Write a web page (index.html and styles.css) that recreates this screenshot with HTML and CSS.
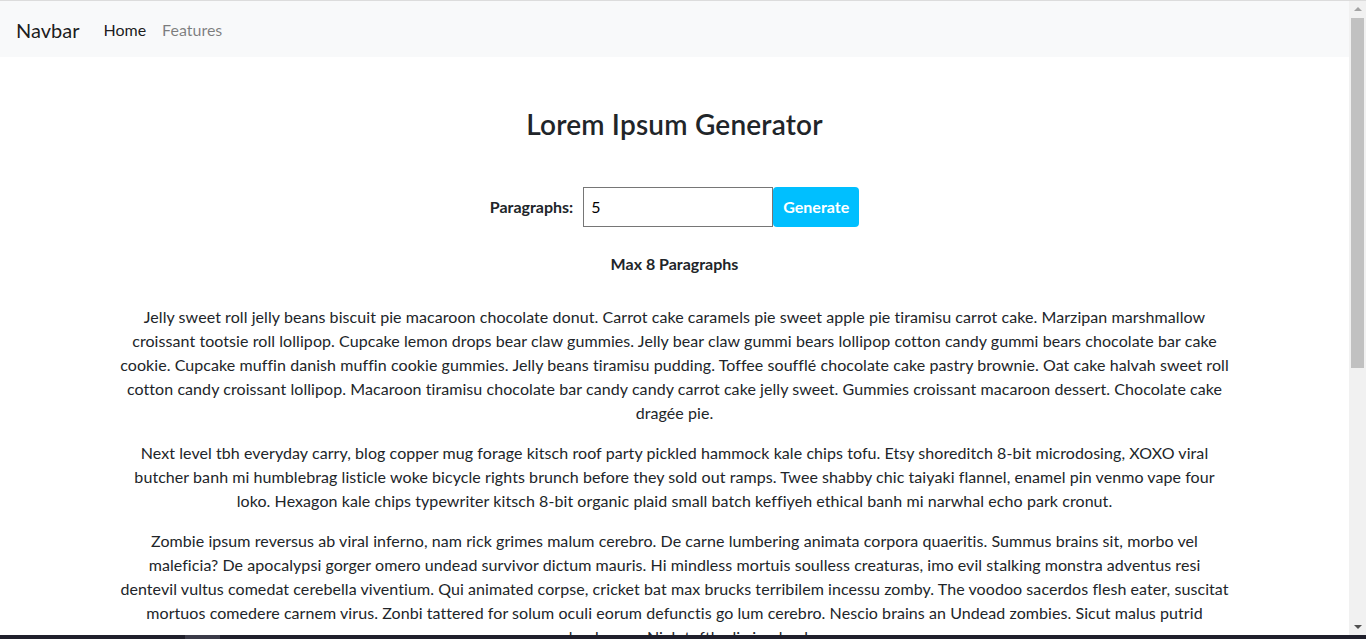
FILE: index.html
```html
<!DOCTYPE html>
<html lang="en">
<head>
<meta charset="utf-8">
<title>Lorem Ipsum Generator</title>
<link rel="stylesheet" href="styles.css">
</head>
<body>
<div class="window">
  <div class="page">
    <nav class="navbar">
      <a class="brand" href="#">Navbar</a>
      <a class="nav-link active" href="#">Home</a>
      <a class="nav-link" href="#">Features</a>
    </nav>
    <main class="container">
      <h3 class="title">Lorem Ipsum Generator</h3>
      <form class="gen-form">
        <label class="label" for="amount">Paragraphs:</label>
        <input class="input" id="amount" type="number" value="5">
        <button class="btn" type="button">Generate</button>
      </form>
      <h6 class="hint">Max 8 Paragraphs</h6>
      <article class="text">
        <p>Jelly sweet roll jelly beans biscuit pie macaroon chocolate donut. Carrot cake caramels pie sweet apple pie tiramisu carrot cake. Marzipan marshmallow croissant tootsie roll lollipop. Cupcake lemon drops bear claw gummies. Jelly bear claw gummi bears lollipop cotton candy gummi bears chocolate bar cake cookie. Cupcake muffin danish muffin cookie gummies. Jelly beans tiramisu pudding. Toffee soufflé chocolate cake pastry brownie. Oat cake halvah sweet roll cotton candy croissant lollipop. Macaroon tiramisu chocolate bar candy candy carrot cake jelly sweet. Gummies croissant macaroon dessert. Chocolate cake dragée pie.</p>
        <p>Next level tbh everyday carry, blog copper mug forage kitsch roof party pickled hammock kale chips tofu. Etsy shoreditch 8-bit microdosing, XOXO viral butcher banh mi humblebrag listicle woke bicycle rights brunch before they sold out ramps. Twee shabby chic taiyaki flannel, enamel pin venmo vape four loko. Hexagon kale chips typewriter kitsch 8-bit organic plaid small batch keffiyeh ethical banh mi narwhal echo park cronut.</p>
        <p>Zombie ipsum reversus ab viral inferno, nam rick grimes malum cerebro. De carne lumbering animata corpora quaeritis. Summus brains sit, morbo vel maleficia? De apocalypsi gorger omero undead survivor dictum mauris. Hi mindless mortuis soulless creaturas, imo evil stalking monstra adventus resi dentevil vultus comedat cerebella viventium. Qui animated corpse, cricket bat max brucks terribilem incessu zomby. The voodoo sacerdos flesh eater, suscitat mortuos comedere carnem virus. Zonbi tattered for solum oculi eorum defunctis go lum cerebro. Nescio brains an Undead zombies. Sicut malus putrid voodoo horror. Nigh tofth eliv ingdead.</p>
      </article>
    </main>
  </div>
  <div class="scrollbar">
    <div class="arrow up"></div>
    <div class="track"><div class="thumb"></div></div>
    <div class="arrow down"></div>
  </div>
</div>
<div class="taskbar"><span class="task-tab"></span></div>
</body>
</html>
```
FILE: styles.css
```css
* { box-sizing: border-box; }
html, body { margin: 0; padding: 0; height: 100%; overflow: hidden; }
body {
  font-family: Lato, "Liberation Sans", sans-serif;
  font-size: 16px;
  line-height: 1.5;
  color: #212529;
  background: #fff;
  display: flex;
  flex-direction: column;
  border-top: 1px solid #dcdcdc;
}
.window { flex: 1; display: flex; min-height: 0; }
.page { flex: 1; overflow: hidden; min-width: 0; }
.navbar {
  display: flex;
  align-items: center;
  height: 56px;
  padding: 1px 16px 0;
  background: #f8f9fa;
}
.brand {
  font-size: 20px;
  color: rgba(0,0,0,.9);
  text-decoration: none;
  margin-right: 16px;
}
.nav-link {
  padding: 8px;
  color: rgba(0,0,0,.5);
  text-decoration: none;
}
.nav-link.active { color: rgba(0,0,0,.9); }
.container {
  max-width: 1140px;
  margin: 0 auto;
  padding: 0 15px;
  text-align: center;
}
.title {
  font-size: 28px;
  font-weight: 600;
  line-height: 1.2;
  margin: 51px 0 0;
  letter-spacing: 0.2px;
}
.gen-form {
  display: flex;
  justify-content: center;
  align-items: center;
  margin-top: 45px;
}
.label { font-weight: 700; margin-right: 10px; }
.input {
  width: 190px;
  height: 40px;
  border: 1px solid #767676;
  padding: 0 7px;
  font: inherit;
  color: #000;
}
.btn {
  height: 40px;
  width: 86px;
  border: none;
  border-radius: 4px;
  background: #00bfff;
  color: #fff;
  font: inherit;
  font-weight: 700;
}
.hint {
  font-size: 16px;
  font-weight: 700;
  line-height: 1.2;
  margin: 27px 0 0;
}
.text { margin-top: 32px; letter-spacing: 0.07px; }
.text p { margin: 0 0 16px; }
.scrollbar {
  width: 17px;
  background: #f1f1f1;
  display: flex;
  flex-direction: column;
  align-items: center;
}
.arrow { width: 0; height: 0; border-left: 4px solid transparent; border-right: 4px solid transparent; margin: 6px 0; }
.arrow.up { border-bottom: 4px solid #a3a3a3; }
.arrow.down { border-top: 4px solid #505050; }
.track { flex: 1; width: 100%; padding: 0 2px; }
.thumb { height: 350px; background: #c1c1c1; margin-top: 1px; }
.taskbar { height: 4px; background: #1f1f2b; flex-shrink: 0; }
.task-tab { display: block; margin-left: 185px; width: 35px; height: 4px; background: #3a3a48; }
```
